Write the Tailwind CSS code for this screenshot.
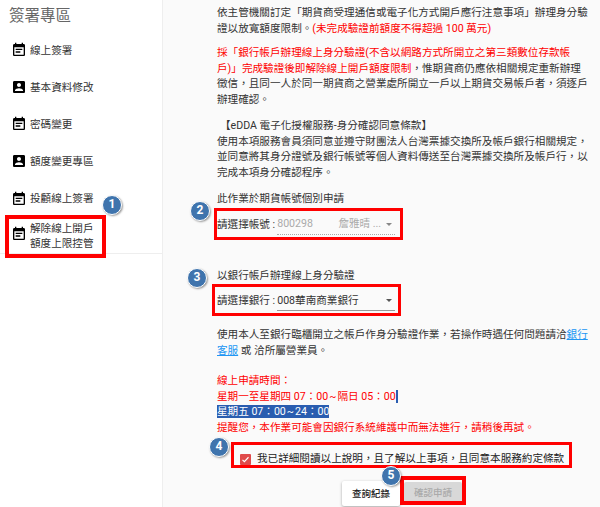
<!DOCTYPE html>
<html lang="zh-Hant">

<head>
  <meta charset="UTF-8" />
  <meta name="viewport" content="width=device-width, initial-scale=1.0" />
  <title>簽署專區</title>
  <script src="https://cdn.jsdelivr.net/npm/@tailwindcss/browser@4"></script>
</head>

<body class="bg-[#fafafa] font-['Roboto','Noto_Sans_CJK_TC',sans-serif] text-[10.6px] leading-[15.5px] text-[#333]">
  <svg class="hidden">
    <symbol id="note" viewBox="0 0 24 24"><path d="M17 10H7v2h10v-2zm2-7h-1V1h-2v2H8V1H6v2H5c-1.11 0-1.99.9-1.99 2L3 19c0 1.1.89 2 2 2h14c1.1 0 2-.9 2-2V5c0-1.1-.9-2-2-2zm0 16H5V8h14v11zm-5-5H7v2h7v-2z"/></symbol>
    <symbol id="box" viewBox="0 0 24 24"><path d="M3 5v14c0 1.1.89 2 2 2h14c1.1 0 2-.9 2-2V5c0-1.1-.9-2-2-2H5c-1.11 0-2 .9-2 2zm12 4c0 1.66-1.34 3-3 3s-3-1.34-3-3 1.34-3 3-3 3 1.34 3 3zm-9 8c0-2 4-3.1 6-3.1s6 1.1 6 3.1v1H6v-1z"/></symbol>
  </svg>

  <div class="relative flex w-[600px] h-[507px] overflow-hidden">
    <!-- sidebar -->
    <aside class="w-[163px] shrink-0 bg-white border-r border-[#eee]">
      <div class="border-b border-[#eee] h-[254px]">
        <h2 class="pl-[9px] pt-[5px] h-[32px] text-[15.5px] leading-[22px] text-[#666]">簽署專區</h2>
        <ul>
          <li class="flex items-center gap-[1px] pl-[11px] h-[37px]"><svg class="w-[16px] h-[16px] mt-[-1px]"><use href="#note" /></svg><span class="ml-[2px]">線上簽署</span></li>
          <li class="flex items-center gap-[1px] pl-[11px] h-[37px]"><svg class="w-[16px] h-[16px] mt-[-1px]"><use href="#box" /></svg><span class="ml-[2px]">基本資料修改</span></li>
          <li class="flex items-center gap-[1px] pl-[11px] h-[37px]"><svg class="w-[16px] h-[16px] mt-[-1px]"><use href="#note" /></svg><span class="ml-[2px]">密碼變更</span></li>
          <li class="flex items-center gap-[1px] pl-[11px] h-[37px]"><svg class="w-[16px] h-[16px] mt-[-1px]"><use href="#box" /></svg><span class="ml-[2px]">額度變更專區</span></li>
          <li class="flex items-center gap-[1px] pl-[11px] h-[37px] pt-[1px]"><svg class="w-[16px] h-[16px] mt-[-1px]"><use href="#note" /></svg><span class="ml-[2px]">投顧線上簽署</span></li>
          <li class="flex items-center gap-[1px] pl-[11px] mt-[-1px] h-[36px]"><svg class="w-[16px] h-[16px]"><use href="#note" /></svg><span class="ml-[2px] mt-[4px]">解除線上開戶<br />額度上限控管</span></li>
        </ul>
      </div>
    </aside>

    <!-- main content -->
    <main class="flex-1 pl-[54px] pt-[5px] whitespace-nowrap">
      <p>依主管機關訂定「期貨商受理通信或電子化方式開戶應行注意事項」辦理身分驗<br />證以放寬額度限制。<span class="text-[#f00]">(未完成驗證前額度不得超過 100 萬元)</span></p>

      <p class="mt-[9px]"><span class="text-[#f00]">採「銀行帳戶辦理線上身分驗證(不含以網路方式所開立之第三類數位存款帳<br />戶)」完成驗證後即解除線上開戶額度限制</span>，惟期貨商仍應依相關規定重新辦理<br />徵信，且同一人於同一期貨商之營業處所開立一戶以上期貨交易帳戶者，須逐戶<br />辦理確認。</p>

      <p class="mt-[11px]"><span class="ml-[3px]">【eDDA 電子化授權服務-身分確認同意條款】</span><br />使用本項服務會員須同意並遵守財團法人台灣票據交換所及帳戶銀行相關規定，<br />並同意將其身分證號及銀行帳號等個人資料傳送至台灣票據交換所及帳戶行，以<br />完成本項身分確認程序。</p>

      <p class="mt-[11px]">此作業於期貨帳號個別申請</p>
      <div class="mt-[6px] flex items-center h-[24px]">
        <span>請選擇帳號 :</span>
        <div class="ml-[2px] w-[118px] h-[20px] flex items-center justify-between border-b border-dotted border-[#aaa] text-[#aaa]">
          <span>800298</span>
          <span class="flex items-center">詹雅晴 ...<span class="ml-[5px] mr-[3px] border-x-[3.5px] border-t-[3.5px] border-x-transparent border-t-[#888]"></span></span>
        </div>
      </div>

      <p class="mt-[31px]">以銀行帳戶辦理線上身分驗證</p>
      <div class="mt-[6px] flex items-center h-[24px]">
        <span>請選擇銀行 :</span>
        <div class="ml-[2px] w-[118px] h-[20px] flex items-center justify-between border-b border-[#999]">
          <span>008華南商業銀行</span>
          <span class="mr-[3px] border-x-[3.5px] border-t-[3.5px] border-x-transparent border-t-[#555]"></span>
        </div>
      </div>

      <p class="mt-[14px]">使用本人至銀行臨櫃開立之帳戶作身分驗證作業，若操作時遇任何問題請洽<a class="text-[#2196f3] underline">銀行<br />客服</a> 或 洽所屬營業員。</p>

      <div class="mt-[15px] text-[#f00]">
        <p>線上申請時間：</p>
        <p>星期一至星期四 07：00<span class="mx-[1px]">~</span>隔日 05：00<span class="inline-block w-[2px] h-[13px] align-middle bg-[#2a5db0]"></span></p>
        <p><span class="bg-[#2a5db0] text-white">星期五 07：00<span class="mx-[1px]">~</span>24：00</span></p>
        <p>提醒您，本作業可能會因銀行系統維護中而無法進行，請稍後再試。</p>
      </div>

      <label class="mt-[11px] ml-[23px] h-[26px] flex items-center">
        <span class="w-[11px] h-[11px] rounded-[1px] bg-[#e04a4a] flex items-center justify-center">
          <svg class="w-[9px] h-[9px]" viewBox="0 0 24 24" fill="none" stroke="white" stroke-width="3"><path d="M4 13l5 5L20 6" /></svg>
        </span>
        <span class="ml-[6px] text-[#222]">我已詳細閱讀以上說明，且了解以上事項，且同意本服務約定條款</span>
      </label>

      <div class="mt-[9px] ml-[125px] flex items-start gap-[4px]">
        <button class="w-[58px] h-[25px] bg-white rounded-[2px] shadow-[0_1px_3px_rgba(0,0,0,0.35)] text-[9.5px] font-medium text-[#222]">查詢紀錄</button>
        <button class="w-[58px] h-[22px] mt-[1px] bg-[#d8d8d8] rounded-[2px] text-[9.5px] font-medium text-[#aaa]">確認申請</button>
      </div>
    </main>

    <!-- annotation boxes -->
    <div class="absolute left-[5px] top-[215px] w-[101px] h-[43px] border-[4px] border-[#f00]"></div>
    <div class="absolute left-[214px] top-[208px] w-[189px] h-[32px] border-[3px] border-[#f00]"></div>
    <div class="absolute left-[212px] top-[284px] w-[189px] h-[32px] border-[3px] border-[#f00]"></div>
    <div class="absolute left-[231px] top-[442px] w-[341px] h-[26px] border-[3px] border-[#f00]"></div>
    <div class="absolute left-[400px] top-[476px] w-[66px] h-[29px] border-[4px] border-[#f00]"></div>

    <!-- numbered badges -->
    <div class="absolute left-[102px] top-[195px] w-[20px] h-[20px] rounded-full bg-[#3f74ad] border border-white shadow-[1px_1px_2px_rgba(0,0,0,0.4)] text-white text-[12px] font-bold flex items-center justify-center">1</div>
    <div class="absolute left-[190px] top-[201px] w-[20px] h-[20px] rounded-full bg-[#3f74ad] border border-white shadow-[1px_1px_2px_rgba(0,0,0,0.4)] text-white text-[12px] font-bold flex items-center justify-center">2</div>
    <div class="absolute left-[187px] top-[268px] w-[20px] h-[20px] rounded-full bg-[#3f74ad] border border-white shadow-[1px_1px_2px_rgba(0,0,0,0.4)] text-white text-[12px] font-bold flex items-center justify-center">3</div>
    <div class="absolute left-[209px] top-[437px] w-[20px] h-[20px] rounded-full bg-[#3f74ad] border border-white shadow-[1px_1px_2px_rgba(0,0,0,0.4)] text-white text-[12px] font-bold flex items-center justify-center">4</div>
    <div class="absolute left-[381px] top-[466px] w-[20px] h-[20px] rounded-full bg-[#3f74ad] border border-white shadow-[1px_1px_2px_rgba(0,0,0,0.4)] text-white text-[12px] font-bold flex items-center justify-center">5</div>
  </div>
</body>

</html>
